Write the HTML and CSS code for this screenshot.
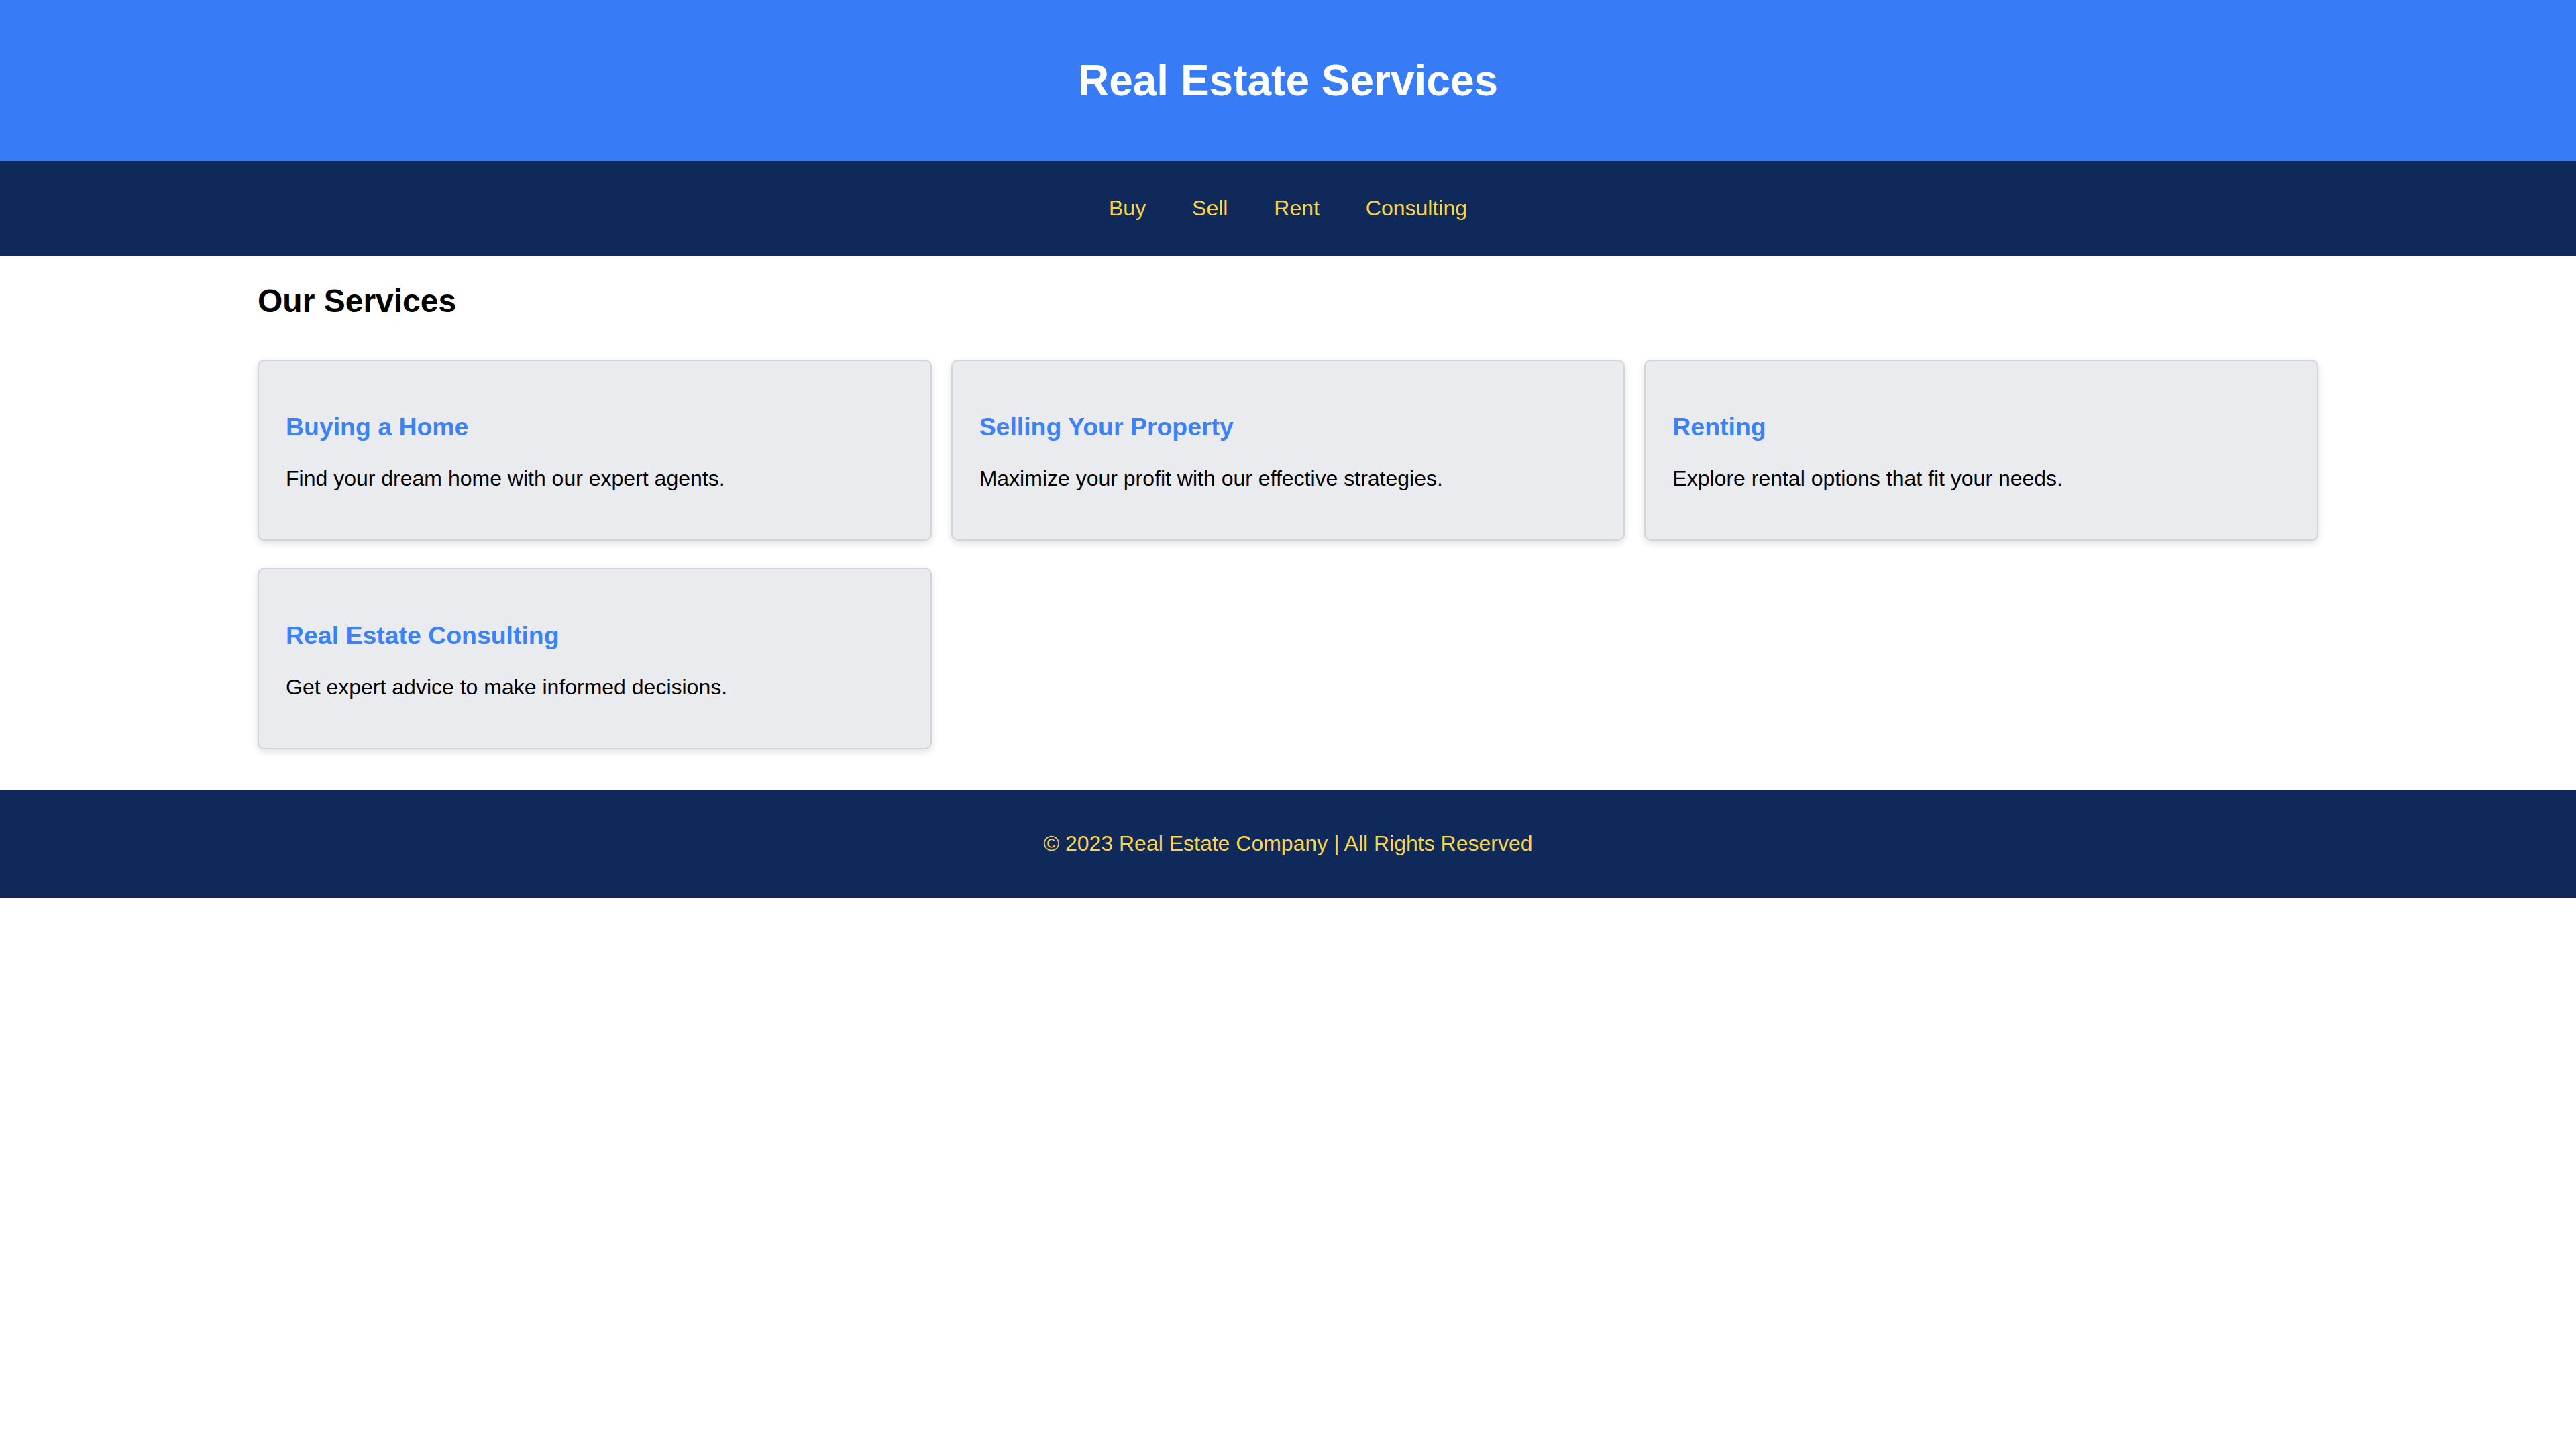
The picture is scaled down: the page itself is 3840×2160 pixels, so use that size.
FILE: index.html
```html
<!DOCTYPE html>
<html lang="en">
<head>
<meta charset="utf-8">
<title>Real Estate Services</title>
<link rel="stylesheet" href="styles.css">
</head>
<body>
<header class="site-header">
  <h1 class="site-title">Real Estate Services</h1>
</header>
<nav class="site-nav">
  <ul class="nav-list">
    <li class="nav-item"><a class="nav-link" href="#">Buy</a></li>
    <li class="nav-item"><a class="nav-link" href="#">Sell</a></li>
    <li class="nav-item"><a class="nav-link" href="#">Rent</a></li>
    <li class="nav-item"><a class="nav-link" href="#">Consulting</a></li>
  </ul>
</nav>
<main class="container">
  <h2 class="section-title">Our Services</h2>
  <div class="services">
    <div class="card">
      <h3 class="card-title">Buying a Home</h3>
      <p class="card-text">Find your dream home with our expert agents.</p>
    </div>
    <div class="card">
      <h3 class="card-title">Selling Your Property</h3>
      <p class="card-text">Maximize your profit with our effective strategies.</p>
    </div>
    <div class="card">
      <h3 class="card-title">Renting</h3>
      <p class="card-text">Explore rental options that fit your needs.</p>
    </div>
    <div class="card">
      <h3 class="card-title">Real Estate Consulting</h3>
      <p class="card-text">Get expert advice to make informed decisions.</p>
    </div>
  </div>
</main>
<footer class="site-footer">
  <p class="footer-text">&copy; 2023 Real Estate Company | All Rights Reserved</p>
</footer>
</body>
</html>
```
FILE: styles.css
```css
html, body {
  background: #ffffff;
}
body {
  margin: 0;
  font-family: "Liberation Sans", Arial, sans-serif;
  font-size: 32px;
  color: #000000;
}
.site-header {
  background: #377bf6;
  color: #ffffff;
  text-align: center;
  padding: 40px 0;
}
.site-title {
  font-size: 64px;
  font-weight: bold;
  margin: 42.88px 0;
}
.site-nav {
  background: #0f2a5a;
  padding: 20px 0;
  text-align: center;
}
.nav-list {
  list-style: none;
  margin: 32px 0;
  padding: 0;
}
.nav-item {
  display: inline;
  margin: 0 30px;
}
.nav-link {
  color: #fcd34d;
  text-decoration: none;
}
.container {
  width: 80%;
  margin: 0 auto;
}
.section-title {
  font-size: 48px;
  font-weight: bold;
  margin: 39.84px 0 60px;
}
.services {
  display: grid;
  grid-template-columns: repeat(3, 1fr);
  column-gap: 29px;
  row-gap: 40px;
  padding-bottom: 60px;
}
.card {
  background: #e9ebef;
  border: 2px solid #d1d5db;
  border-radius: 10px;
  padding: 40px;
  box-shadow: 0 4px 12px rgba(0, 0, 0, 0.12);
}
.card-title {
  color: #3b82f6;
  font-size: 37.44px;
  font-weight: bold;
  margin: 37.44px 0;
}
.card-text {
  margin: 32px 0;
}
.site-footer {
  background: #0f2a5a;
  color: #fcd34d;
  text-align: center;
  padding: 30px 0;
}
.footer-text {
  margin: 32px 0;
}
```
